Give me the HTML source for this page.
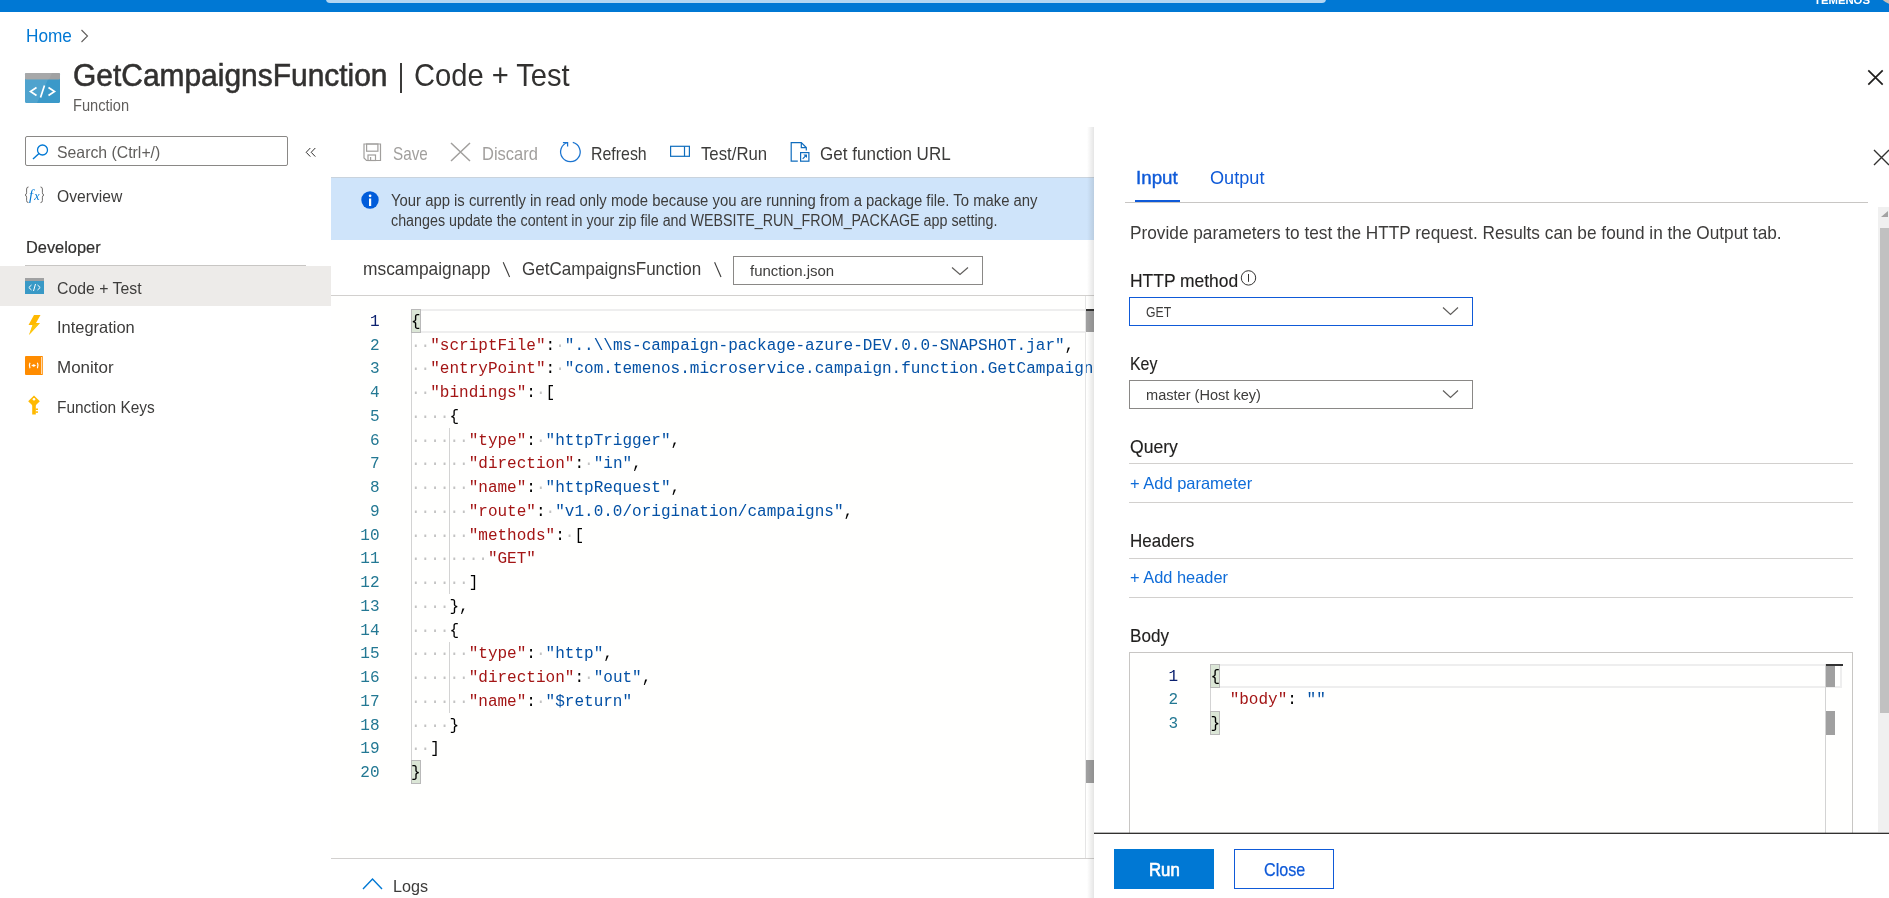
<!DOCTYPE html><html><head><meta charset="utf-8"><style>
html,body{margin:0;padding:0;width:1889px;height:898px;overflow:hidden;background:#fff;position:relative}
#root{position:absolute;left:0;top:0;width:1889px;height:898px;overflow:hidden;background:#fff;will-change:transform}
.t{position:absolute;white-space:pre;line-height:1;font-family:"Liberation Sans",sans-serif}
.r{position:absolute}
.s{position:absolute;overflow:visible}
.code{position:absolute;font-family:"Liberation Mono",monospace;font-size:16.03px;line-height:23.75px;white-space:pre;color:#000}
.ck{color:#a31515}.cs{color:#0451a5}.cp{color:#000}.cw{color:#c3c3c3}
.lnum{position:absolute;font-family:"Liberation Mono",monospace;font-size:16.03px;line-height:23.75px;text-align:right;white-space:pre}
.ln{height:auto}
</style></head><body><div id="root"><div class="r" style="left:0px;top:0px;width:1889px;height:12px;background:#0078d4"></div><div class="r" style="left:326px;top:-10px;width:1000px;height:13px;background:#b3d6f2;border-radius:4px"></div><div class="t" style="left:1813.50px;top:-5px;font-size:11.1px;color:#ffffff;font-weight:700;transform:scaleX(1.0202);transform-origin:0 0;">TEMENOS</div><div class="r" style="left:1876.1px;top:-35.1px;width:40px;height:40px;border-radius:50%;background:#cdbfb5"></div><div class="t" style="left:26.00px;top:28px;font-size:17.8px;color:#0078d4;font-weight:400;transform:scaleX(0.9688);transform-origin:0 0;">Home</div><svg class="s" style="left:80px;top:29px;" width="9" height="14" viewBox="0 0 9 14"><path d="M1.5 1 L7.5 7 L1.5 13" fill="none" stroke="#605e5c" stroke-width="1.1"/></svg><svg class="s" style="left:25px;top:73px;" width="35" height="30" viewBox="0 0 35 30"><rect x="0" y="0" width="35" height="30" rx="1.5" fill="#3b99c9"/><rect x="0" y="0" width="35" height="6.5" rx="1" fill="#a0a1a2"/><path d="M0 6.5 L23 6.5 L12 30 L0 30 Z" fill="#ffffff" opacity="0.10"/><path d="M0 0 L27 0 L24 6.5 L0 6.5 Z" fill="#ffffff" opacity="0.08"/><path d="M11.5 14.5 L5.5 18.5 L11.5 22.5 M23.5 14.5 L29.5 18.5 L23.5 22.5 M19.5 12.5 L15.5 24.5" fill="none" stroke="#fff" stroke-width="1.7"/></svg><div class="t" style="left:73.00px;top:60px;font-size:30.5px;color:#323130;font-weight:400;transform:scaleX(0.9816);transform-origin:0 0;-webkit-text-stroke:0.55px #323130">GetCampaignsFunction</div><div class="r" style="left:400px;top:63px;width:2px;height:30px;background:#3b3a39"></div><div class="t" style="left:414.00px;top:60px;font-size:30.5px;color:#323130;font-weight:400;transform:scaleX(0.9546);transform-origin:0 0;">Code + Test</div><div class="t" style="left:73.00px;top:98px;font-size:16.0px;color:#605e5c;font-weight:400;transform:scaleX(0.9126);transform-origin:0 0;">Function</div><svg class="s" style="left:1866px;top:68px;" width="18" height="18" viewBox="0 0 18 18"><path d="M2.3 2.3 L16.7 16.7 M16.7 2.3 L2.3 16.7" stroke="#201f1e" stroke-width="1.7"/></svg><div class="r" style="left:25px;top:136px;width:263px;height:30px;border:1px solid #8a8886;border-radius:2px;box-sizing:border-box;background:#fff"></div><svg class="s" style="left:32px;top:144px;" width="17" height="16" viewBox="0 0 17 16"><circle cx="10.5" cy="6" r="5" fill="none" stroke="#0078d4" stroke-width="1.3"/><path d="M7 9.5 L1 15" stroke="#0078d4" stroke-width="1.4"/></svg><div class="t" style="left:56.70px;top:144px;font-size:16.5px;color:#605e5c;font-weight:400;transform:scaleX(0.9587);transform-origin:0 0;">Search (Ctrl+/)</div><svg class="s" style="left:305px;top:146.5px;" width="12" height="11" viewBox="0 0 12 11"><path d="M5.3 1 L1.2 5.3 L5.3 9.6 M10.3 1 L6.2 5.3 L10.3 9.6" fill="none" stroke="#323130" stroke-width="1"/></svg><svg class="s" style="left:24px;top:186px;" width="21" height="18" viewBox="0 0 21 18"><path d="M4.5 1 Q2.6 1 2.6 3 V6.8 Q2.6 8.6 1 9 Q2.6 9.4 2.6 11.2 V14.6 Q2.6 16.6 4.5 16.6 M16.5 1 Q18.4 1 18.4 3 V6.8 Q18.4 8.6 20 9 Q18.4 9.4 18.4 11.2 V14.6 Q18.4 16.6 16.5 16.6" fill="none" stroke="#605e5c" stroke-width="0.9"/><text x="5" y="13.5" font-family="Liberation Serif" font-style="italic" font-size="14.5" fill="#0078d4">f</text><text x="10.2" y="13.5" font-family="Liberation Serif" font-style="italic" font-size="12" fill="#0078d4">x</text></svg><div class="t" style="left:56.70px;top:188px;font-size:16.5px;color:#3d3c3b;font-weight:400;transform:scaleX(0.9491);transform-origin:0 0;">Overview</div><div class="t" style="left:25.60px;top:239px;font-size:16.5px;color:#323130;font-weight:400;transform:scaleX(0.9920);transform-origin:0 0;-webkit-text-stroke:0.2px #323130">Developer</div><div class="r" style="left:25px;top:265px;width:281px;height:1px;background:#c8c6c4"></div><div class="r" style="left:0px;top:266px;width:331px;height:40px;background:#edebe9"></div><svg class="s" style="left:25px;top:278px;" width="19" height="16" viewBox="0 0 19 16"><rect width="19" height="16" fill="#3999c6"/><rect width="19" height="3" fill="#a0a1a2"/><path d="M6.5 7 L3.8 9.5 L6.5 12 M12.5 7 L15.2 9.5 L12.5 12 M10.5 6 L8.5 13" fill="none" stroke="#fff" stroke-width="1"/></svg><div class="t" style="left:56.80px;top:280px;font-size:16.5px;color:#3d3c3b;font-weight:400;transform:scaleX(0.9588);transform-origin:0 0;">Code + Test</div><svg class="s" style="left:27px;top:315px;" width="14" height="20" viewBox="0 0 14 20"><path d="M7 0 L13.5 0 L9 8 L13 8 L2 20 L5.5 10 L1.5 10 Z" fill="#ffb900"/><path d="M13 8 L2 20 L5.5 10 Z" fill="#fcd116" opacity="0.6"/></svg><div class="t" style="left:57.00px;top:319px;font-size:16.5px;color:#3d3c3b;font-weight:400;transform:scaleX(0.9966);transform-origin:0 0;">Integration</div><svg class="s" style="left:25px;top:356px;" width="19" height="19" viewBox="0 0 19 19"><rect x="0" y="0" width="18" height="19" rx="1" fill="#ff8c00"/><rect x="16" y="1" width="1.3" height="17" fill="#ffd9a8"/><path d="M5 6.8 Q3.6 9.5 5 12.2 M12.4 6.8 Q13.8 9.5 12.4 12.2" fill="none" stroke="#fff" stroke-width="1.2"/><path d="M6.6 9.5 H10.8" stroke="#fff" stroke-width="0.8"/><circle cx="8.7" cy="9.5" r="1.3" fill="#fff"/></svg><div class="t" style="left:57.00px;top:359px;font-size:16.5px;color:#3d3c3b;font-weight:400;transform:scaleX(1.0286);transform-origin:0 0;">Monitor</div><svg class="s" style="left:27px;top:395px;" width="14" height="20" viewBox="0 0 14 20"><path d="M7 0.5 L12.8 6.3 L7 12 L1.2 6.3 Z" fill="#ffb900"/><circle cx="7" cy="4.2" r="1.3" fill="#fff"/><rect x="5.2" y="10" width="3.6" height="9.5" fill="#ffb900"/><rect x="8.5" y="13.5" width="2.5" height="1.5" fill="#ffb900"/><rect x="8.5" y="16.3" width="2.5" height="1.5" fill="#ffb900"/></svg><div class="t" style="left:57.00px;top:399px;font-size:16.5px;color:#3d3c3b;font-weight:400;transform:scaleX(0.9353);transform-origin:0 0;">Function Keys</div><svg class="s" style="left:363px;top:143px;" width="19" height="19" viewBox="0 0 19 19"><path d="M1 1 H17.5 V17.5 H3.5 L1 15 Z" fill="none" stroke="#a19f9d" stroke-width="1.2"/><rect x="3.6" y="1" width="11.3" height="7.2" fill="none" stroke="#a19f9d" stroke-width="1.2"/><rect x="5" y="12" width="7.5" height="5.5" fill="none" stroke="#a19f9d" stroke-width="1.2"/><rect x="7" y="14" width="1.2" height="3.5" fill="#a19f9d"/></svg><div class="t" style="left:392.90px;top:146px;font-size:17.8px;color:#a19f9d;font-weight:400;transform:scaleX(0.8575);transform-origin:0 0;">Save</div><svg class="s" style="left:450px;top:142px;" width="21" height="20" viewBox="0 0 21 20"><path d="M1 1 L20 19 M20 1 L1 19" stroke="#a19f9d" stroke-width="1.5"/></svg><div class="t" style="left:481.50px;top:146px;font-size:17.8px;color:#a19f9d;font-weight:400;transform:scaleX(0.9264);transform-origin:0 0;">Discard</div><svg class="s" style="left:559px;top:141px;" width="23" height="23" viewBox="0 0 23 23"><path d="M8.6 1.5 A9.8 9.8 0 1 0 13.8 1.4" fill="none" stroke="#1b74d0" stroke-width="1.25"/><path d="M3.9 1.5 H8.6 V5.6" fill="none" stroke="#1b74d0" stroke-width="1.25"/></svg><div class="t" style="left:591.20px;top:146px;font-size:17.8px;color:#3d3c3b;font-weight:400;transform:scaleX(0.8950);transform-origin:0 0;">Refresh</div><svg class="s" style="left:669px;top:145px;" width="22" height="13" viewBox="0 0 22 13"><rect x="1.6" y="1.3" width="18.8" height="10" fill="none" stroke="#106ebe" stroke-width="1.2"/><path d="M15.5 1.3 V11.3" stroke="#106ebe" stroke-width="1.2"/></svg><div class="t" style="left:700.80px;top:146px;font-size:17.8px;color:#3d3c3b;font-weight:400;transform:scaleX(0.9421);transform-origin:0 0;">Test/Run</div><svg class="s" style="left:790px;top:142px;" width="20" height="20" viewBox="0 0 20 20"><path d="M7.8 19.2 H1.2 V0.6 H11.3 L16.3 5.6 V8.6 M11.3 0.6 V5.6 H16.3" fill="none" stroke="#0f6cbd" stroke-width="1.2"/><rect x="10.6" y="10.6" width="8.3" height="8.6" fill="none" stroke="#0f6cbd" stroke-width="1.2"/><path d="M12.7 16.8 L16 13.5" stroke="#0f6cbd" stroke-width="1.1"/><path d="M13.3 12.4 H17 V16.1 Z" fill="#0f6cbd"/></svg><div class="t" style="left:820.00px;top:146px;font-size:17.8px;color:#3d3c3b;font-weight:400;transform:scaleX(0.9581);transform-origin:0 0;">Get function URL</div><div class="r" style="left:331px;top:177px;width:763px;height:63px;background:#cfe4fa"></div><div class="r" style="left:331px;top:177px;width:763px;height:1px;background:#c9d3dd"></div><svg class="s" style="left:361px;top:191px;" width="18" height="18" viewBox="0 0 18 18"><circle cx="9" cy="9" r="8.7" fill="#015cda"/><rect x="8" y="7.5" width="2.2" height="7.5" fill="#fff"/><circle cx="9.1" cy="4.8" r="1.35" fill="#fff"/></svg><div class="t" style="left:390.50px;top:193px;font-size:16.0px;color:#3d3c3b;font-weight:400;transform:scaleX(0.9284);transform-origin:0 0;">Your app is currently in read only mode because you are running from a package file. To make any</div><div class="t" style="left:390.50px;top:213px;font-size:16.0px;color:#3d3c3b;font-weight:400;transform:scaleX(0.8930);transform-origin:0 0;">changes update the content in your zip file and WEBSITE_RUN_FROM_PACKAGE app setting.</div><div class="t" style="left:362.70px;top:261px;font-size:17.8px;color:#3d3c3b;font-weight:400;transform:scaleX(0.9762);transform-origin:0 0;">mscampaignapp</div><svg class="s" style="left:500px;top:260px;" width="14" height="20" viewBox="0 0 14 20"><path d="M3.2 2.3 L9.6 17" stroke="#3d3c3b" stroke-width="1.1"/></svg><div class="t" style="left:521.70px;top:261px;font-size:17.8px;color:#3d3c3b;font-weight:400;transform:scaleX(0.9589);transform-origin:0 0;">GetCampaignsFunction</div><svg class="s" style="left:711px;top:260px;" width="14" height="20" viewBox="0 0 14 20"><path d="M3.6 2.3 L10 17" stroke="#3d3c3b" stroke-width="1.1"/></svg><div class="r" style="left:733px;top:256px;width:250px;height:29px;border:1px solid #8a8886;box-sizing:border-box;background:#fff"></div><div class="t" style="left:749.50px;top:263px;font-size:15.2px;color:#3d3c3b;font-weight:400;transform:scaleX(0.9865);transform-origin:0 0;">function.json</div><svg class="s" style="left:951px;top:265.5px;" width="18" height="10" viewBox="0 0 18 10"><path d="M1 1.5 L9 8.5 L17 1.5" fill="none" stroke="#605e5c" stroke-width="1.2"/></svg><div class="r" style="left:331px;top:295px;width:763px;height:1px;background:#d2d0ce"></div><div class="r" style="left:331px;top:296px;width:763px;height:562px;background:#fffffe"></div><div class="r" style="left:420px;top:309.25px;width:666px;height:23.75px;border-top:2px solid #eeeeee;border-bottom:2px solid #eeeeee;box-sizing:border-box"></div><div class="r" style="left:411px;top:309.25px;width:10px;height:23.75px;background:#dbe6d6;border:1px solid #b9b9b9;box-sizing:border-box"></div><div class="r" style="left:411px;top:760px;width:10px;height:24px;background:#dbe6d6;border:1px solid #b9b9b9;box-sizing:border-box"></div><div class="r" style="left:411px;top:333px;width:1px;height:427px;background:#d3d3d3"></div><div class="r" style="left:449px;top:428px;width:1px;height:166px;background:#d3d3d3"></div><div class="r" style="left:449px;top:642px;width:1px;height:71px;background:#d3d3d3"></div><div class="code" style="left:411.0px;top:310.75px;"><div class="ln"><span class="cp">{</span></div><div class="ln"><span class="cw">··</span><span class="ck">&quot;scriptFile&quot;</span><span class="cp">:</span><span class="cw">·</span><span class="cs">&quot;..\\ms-campaign-package-azure-DEV.0.0-SNAPSHOT.jar&quot;</span><span class="cp">,</span></div><div class="ln"><span class="cw">··</span><span class="ck">&quot;entryPoint&quot;</span><span class="cp">:</span><span class="cw">·</span><span class="cs">&quot;com.temenos.microservice.campaign.function.GetCampaignsFunction.run&quot;</span><span class="cp">,</span></div><div class="ln"><span class="cw">··</span><span class="ck">&quot;bindings&quot;</span><span class="cp">:</span><span class="cw">·</span><span class="cp">[</span></div><div class="ln"><span class="cw">····</span><span class="cp">{</span></div><div class="ln"><span class="cw">······</span><span class="ck">&quot;type&quot;</span><span class="cp">:</span><span class="cw">·</span><span class="cs">&quot;httpTrigger&quot;</span><span class="cp">,</span></div><div class="ln"><span class="cw">······</span><span class="ck">&quot;direction&quot;</span><span class="cp">:</span><span class="cw">·</span><span class="cs">&quot;in&quot;</span><span class="cp">,</span></div><div class="ln"><span class="cw">······</span><span class="ck">&quot;name&quot;</span><span class="cp">:</span><span class="cw">·</span><span class="cs">&quot;httpRequest&quot;</span><span class="cp">,</span></div><div class="ln"><span class="cw">······</span><span class="ck">&quot;route&quot;</span><span class="cp">:</span><span class="cw">·</span><span class="cs">&quot;v1.0.0/origination/campaigns&quot;</span><span class="cp">,</span></div><div class="ln"><span class="cw">······</span><span class="ck">&quot;methods&quot;</span><span class="cp">:</span><span class="cw">·</span><span class="cp">[</span></div><div class="ln"><span class="cw">········</span><span class="ck">&quot;GET&quot;</span></div><div class="ln"><span class="cw">······</span><span class="cp">]</span></div><div class="ln"><span class="cw">····</span><span class="cp">},</span></div><div class="ln"><span class="cw">····</span><span class="cp">{</span></div><div class="ln"><span class="cw">······</span><span class="ck">&quot;type&quot;</span><span class="cp">:</span><span class="cw">·</span><span class="cs">&quot;http&quot;</span><span class="cp">,</span></div><div class="ln"><span class="cw">······</span><span class="ck">&quot;direction&quot;</span><span class="cp">:</span><span class="cw">·</span><span class="cs">&quot;out&quot;</span><span class="cp">,</span></div><div class="ln"><span class="cw">······</span><span class="ck">&quot;name&quot;</span><span class="cp">:</span><span class="cw">·</span><span class="cs">&quot;$return&quot;</span></div><div class="ln"><span class="cw">····</span><span class="cp">}</span></div><div class="ln"><span class="cw">··</span><span class="cp">]</span></div><div class="ln"><span class="cp">}</span></div></div><div class="lnum" style="left:331px;top:310.75px;width:48.5px"><div style="color:#0b216f">1</div><div style="color:#237893">2</div><div style="color:#237893">3</div><div style="color:#237893">4</div><div style="color:#237893">5</div><div style="color:#237893">6</div><div style="color:#237893">7</div><div style="color:#237893">8</div><div style="color:#237893">9</div><div style="color:#237893">10</div><div style="color:#237893">11</div><div style="color:#237893">12</div><div style="color:#237893">13</div><div style="color:#237893">14</div><div style="color:#237893">15</div><div style="color:#237893">16</div><div style="color:#237893">17</div><div style="color:#237893">18</div><div style="color:#237893">19</div><div style="color:#237893">20</div></div><div class="r" style="left:1085px;top:296px;width:1px;height:562px;background:#e5e5e5"></div><div class="r" style="left:1086px;top:310px;width:8px;height:22px;background:#a0a0a0"></div><div class="r" style="left:1086px;top:309px;width:8px;height:2px;background:#333"></div><div class="r" style="left:1086px;top:760px;width:8px;height:23px;background:#a0a0a0"></div><div class="r" style="left:331px;top:858px;width:763px;height:1px;background:#d2d0ce"></div><div class="r" style="left:331px;top:859px;width:763px;height:39px;background:#fff"></div><svg class="s" style="left:362px;top:877px;" width="21" height="13" viewBox="0 0 21 13"><path d="M1 12 L10.5 2 L20 12" fill="none" stroke="#0078d4" stroke-width="1.4"/></svg><div class="t" style="left:393.00px;top:878px;font-size:17px;color:#3d3c3b;font-weight:400;transform:scaleX(0.9499);transform-origin:0 0;">Logs</div><div class="r" style="left:1087px;top:127px;width:7px;height:771px;background:linear-gradient(to right,rgba(0,0,0,0),rgba(0,0,0,0.10))"></div><div class="r" style="left:1094px;top:118px;width:795px;height:780px;background:#fff"></div><svg class="s" style="left:1873px;top:149px;" width="17" height="17" viewBox="0 0 17 17"><path d="M1 1 L16 16 M16 1 L1 16" stroke="#323130" stroke-width="1.4"/></svg><div class="t" style="left:1136.00px;top:170px;font-size:17.8px;color:#0f5ad8;font-weight:400;transform:scaleX(1.0554);transform-origin:0 0;-webkit-text-stroke:0.4px #0f5ad8">Input</div><div class="t" style="left:1210.20px;top:170px;font-size:17.8px;color:#0f5ad8;font-weight:400;transform:scaleX(1.0197);transform-origin:0 0;">Output</div><div class="r" style="left:1125px;top:202px;width:743px;height:1px;background:#c8c6c4"></div><div class="r" style="left:1135px;top:200px;width:45px;height:2px;background:#0f5ad8"></div><div class="t" style="left:1130.00px;top:225px;font-size:17.8px;color:#3d3c3b;font-weight:400;transform:scaleX(0.9700);transform-origin:0 0;">Provide parameters to test the HTTP request. Results can be found in the Output tab.</div><div class="t" style="left:1130.20px;top:273px;font-size:17.8px;color:#201f1e;font-weight:400;transform:scaleX(0.9801);transform-origin:0 0;-webkit-text-stroke:0.15px #201f1e">HTTP method</div><svg class="s" style="left:1240px;top:270px;" width="17" height="17" viewBox="0 0 17 17"><circle cx="8.5" cy="7.9" r="7.2" fill="none" stroke="#323130" stroke-width="1"/><path d="M8.5 4 V11.8" stroke="#323130" stroke-width="1"/></svg><div class="r" style="left:1129px;top:297px;width:344px;height:29px;border:1px solid #0f5ad8;box-sizing:border-box"></div><div class="t" style="left:1145.80px;top:304px;font-size:15.2px;color:#3d3c3b;font-weight:400;transform:scaleX(0.8068);transform-origin:0 0;">GET</div><svg class="s" style="left:1442px;top:306px;" width="17" height="10" viewBox="0 0 17 10"><path d="M1 1.5 L8.5 8.5 L16 1.5" fill="none" stroke="#605e5c" stroke-width="1.2"/></svg><div class="t" style="left:1130.00px;top:356px;font-size:17.8px;color:#201f1e;font-weight:400;transform:scaleX(0.8937);transform-origin:0 0;-webkit-text-stroke:0.15px #201f1e">Key</div><div class="r" style="left:1129px;top:380px;width:344px;height:29px;border:1px solid #8a8886;box-sizing:border-box"></div><div class="t" style="left:1145.80px;top:387px;font-size:15.2px;color:#3d3c3b;font-weight:400;transform:scaleX(0.9589);transform-origin:0 0;">master (Host key)</div><svg class="s" style="left:1442px;top:389px;" width="17" height="10" viewBox="0 0 17 10"><path d="M1 1.5 L8.5 8.5 L16 1.5" fill="none" stroke="#605e5c" stroke-width="1.2"/></svg><div class="t" style="left:1129.70px;top:439px;font-size:17.8px;color:#201f1e;font-weight:400;transform:scaleX(0.9884);transform-origin:0 0;-webkit-text-stroke:0.15px #201f1e">Query</div><div class="r" style="left:1129px;top:463px;width:724px;height:1px;background:#d2d0ce"></div><div class="t" style="left:1130.20px;top:475px;font-size:16.5px;color:#0f6cd8;font-weight:400;transform:scaleX(0.9978);transform-origin:0 0;">+ Add parameter</div><div class="r" style="left:1129px;top:502px;width:724px;height:1px;background:#d2d0ce"></div><div class="t" style="left:1130.00px;top:533px;font-size:17.8px;color:#201f1e;font-weight:400;transform:scaleX(0.9542);transform-origin:0 0;-webkit-text-stroke:0.15px #201f1e">Headers</div><div class="r" style="left:1129px;top:558px;width:724px;height:1px;background:#d2d0ce"></div><div class="t" style="left:1130.00px;top:569px;font-size:16.5px;color:#0f6cd8;font-weight:400;transform:scaleX(0.9936);transform-origin:0 0;">+ Add header</div><div class="r" style="left:1129px;top:597px;width:724px;height:1px;background:#d2d0ce"></div><div class="t" style="left:1130.00px;top:628px;font-size:17.8px;color:#201f1e;font-weight:400;transform:scaleX(0.9610);transform-origin:0 0;-webkit-text-stroke:0.15px #201f1e">Body</div><div class="r" style="left:1129px;top:652px;width:724px;height:248px;border:1px solid #c8c6c4;box-sizing:border-box;background:#fffffe"></div><div class="r" style="left:1219px;top:664px;width:623px;height:24px;border-top:2px solid #eeeeee;border-bottom:2px solid #eeeeee;border-right:2px solid #eeeeee;box-sizing:border-box"></div><div class="r" style="left:1210px;top:664px;width:10px;height:24px;background:#dbe6d6;border:1px solid #b9b9b9;box-sizing:border-box"></div><div class="r" style="left:1210px;top:711px;width:10px;height:24px;background:#dbe6d6;border:1px solid #b9b9b9;box-sizing:border-box"></div><div class="r" style="left:1210px;top:688px;width:1px;height:23px;background:#d3d3d3"></div><div class="code" style="left:1210.4px;top:665.80px;line-height:23.5px"><div class="ln"><span class="cp">{</span></div><div class="ln">  <span class="ck">"body"</span><span class="cp">:</span> <span class="cs">""</span></div><div class="ln"><span class="cp">}</span></div></div><div class="lnum" style="left:1129px;top:665.80px;width:49px;line-height:23.5px"><div style="color:#0b216f">1</div><div style="color:#237893">2</div><div style="color:#237893">3</div></div><div class="r" style="left:1825px;top:664px;width:1px;height:169px;background:#d3d3d3"></div><div class="r" style="left:1826px;top:665px;width:9px;height:22px;background:#a0a0a0"></div><div class="r" style="left:1826px;top:664px;width:17px;height:2px;background:#333"></div><div class="r" style="left:1826px;top:711px;width:9px;height:24px;background:#a0a0a0"></div><div class="r" style="left:1878px;top:207px;width:11px;height:625px;background:#f0f0f0"></div><svg class="s" style="left:1880px;top:210px;" width="9" height="8" viewBox="0 0 9 8"><path d="M1 7 L8 7 L8 1 Z" fill="#a3a3a3"/></svg><div class="r" style="left:1880px;top:228px;width:9px;height:485px;background:#c1c1c1"></div><div class="r" style="left:1094px;top:833px;width:795px;height:65px;background:#fff"></div><div class="r" style="left:1094px;top:833px;width:795px;height:1px;background:#323130"></div><div class="r" style="left:1094px;top:832px;width:795px;height:1px;background:rgba(50,49,48,0.35)"></div><div class="r" style="left:1114px;top:849px;width:100px;height:40px;background:#0078d4"></div><div class="t" style="left:1148.90px;top:862px;font-size:17.8px;color:#ffffff;font-weight:400;transform:scaleX(0.9430);transform-origin:0 0;-webkit-text-stroke:0.65px #ffffff">Run</div><div class="r" style="left:1234px;top:849px;width:100px;height:40px;border:1px solid #0f5ad8;box-sizing:border-box;background:#fff"></div><div class="t" style="left:1263.70px;top:862px;font-size:17.8px;color:#0f5ad8;font-weight:400;transform:scaleX(0.9072);transform-origin:0 0;-webkit-text-stroke:0.25px #0f5ad8">Close</div></div></body></html>
